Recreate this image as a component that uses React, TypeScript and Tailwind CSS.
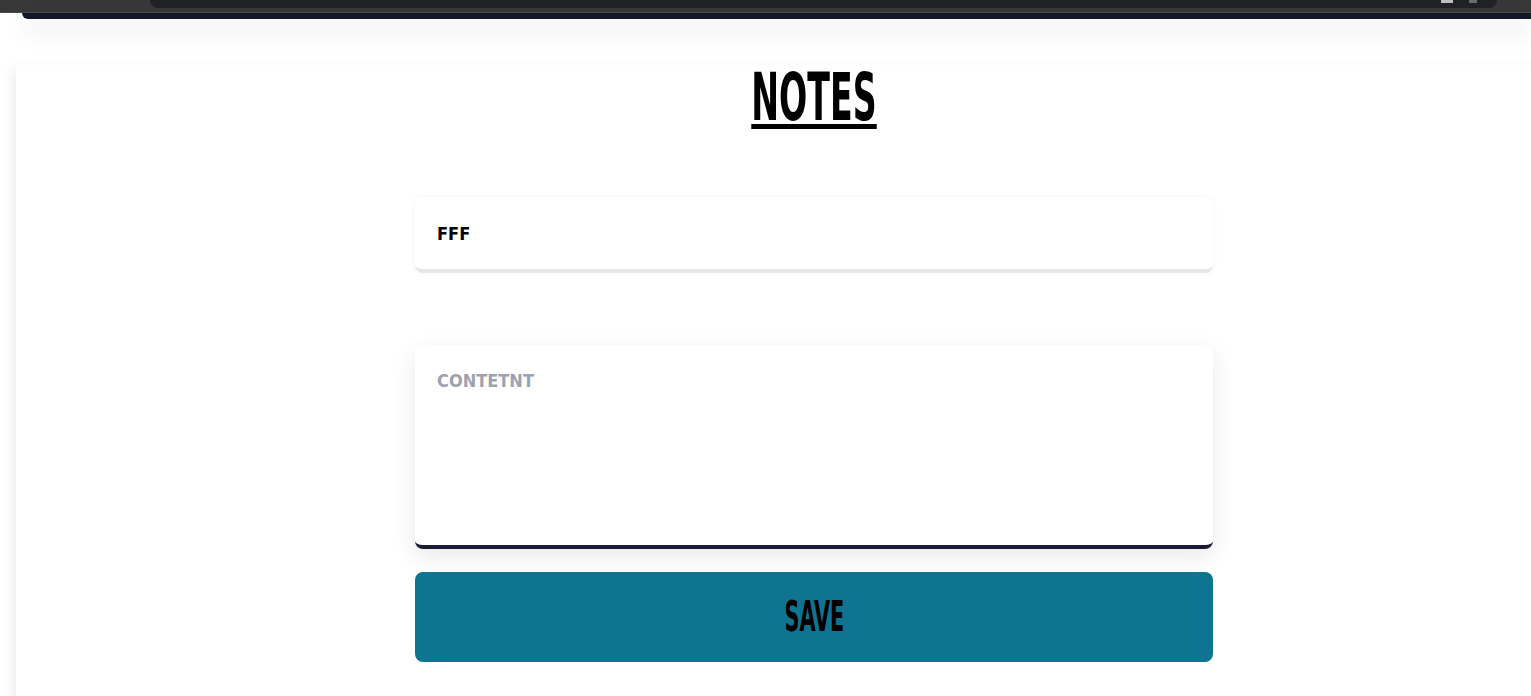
import React, { useState } from 'react';

const font = "font-['DejaVu_Sans_Condensed','DejaVu_Sans',sans-serif] font-bold";

const App: React.FC = () => {
  const [title, setTitle] = useState('FFF');
  const [content, setContent] = useState('');

  return (
    <div className="h-[696px] w-full overflow-hidden bg-white">
      {/* browser chrome strip */}
      <div className="h-[13px] bg-[#383838] border-b border-[#4b4b4b] flex">
        <div className="ml-[150px] mr-[34px] flex-1 h-[8px] bg-[#202124] rounded-b-[10px] flex justify-end items-start gap-[16px] pr-[20px]">
          <span className="w-[12px] h-[3px] bg-[#bdbdbd]"></span>
          <span className="w-[8px] h-[3px] bg-[#6b6b6b]"></span>
        </div>
      </div>

      {/* top nav bar */}
      <div className="ml-[22px] h-[6px] bg-[#111827] rounded-bl-[6px] shadow-[0_10px_24px_rgba(0,0,0,0.16)]"></div>

      <div className="ml-[16px] mt-[46px] w-[1596px] h-[700px] bg-white shadow-[-6px_2px_10px_-2px_rgba(0,0,0,0.07)]">
        <div className="w-[798px] mx-auto flex flex-col">
          <div className="flex justify-center">
            <h1 className={`${font} inline-block text-[66px] leading-none text-black underline decoration-[5px] underline-offset-[4px] scale-x-[0.56]`}>
              NOTES
            </h1>
          </div>

          <input
            value={title}
            onChange={(e) => setTitle(e.target.value)}
            className={`${font} mt-[66px] h-[76px] w-full rounded-lg bg-white px-[22px] text-[18px] uppercase text-black border-b-[4px] border-[#e5e7eb] shadow-[0_0_6px_rgba(0,0,0,0.05)] outline-none`}
          />

          <textarea
            value={content}
            onChange={(e) => setContent(e.target.value)}
            placeholder="CONTETNT"
            className={`${font} mt-[72px] h-[204px] w-full resize-none rounded-lg bg-white px-[22px] pt-[22px] text-[18px] uppercase text-black placeholder:text-[#9ca3af] border-b-[4px] border-[#1b1c33] shadow-[0_8px_24px_rgba(0,0,0,0.09)] outline-none`}
          />

          <button className="mt-[23px] h-[90px] w-full rounded-lg bg-[#0e7490] flex items-center justify-center">
            <span className={`${font} inline-block text-[42px] leading-none text-black scale-x-[0.55]`}>SAVE</span>
          </button>
        </div>
      </div>
    </div>
  );
};

export default App;
